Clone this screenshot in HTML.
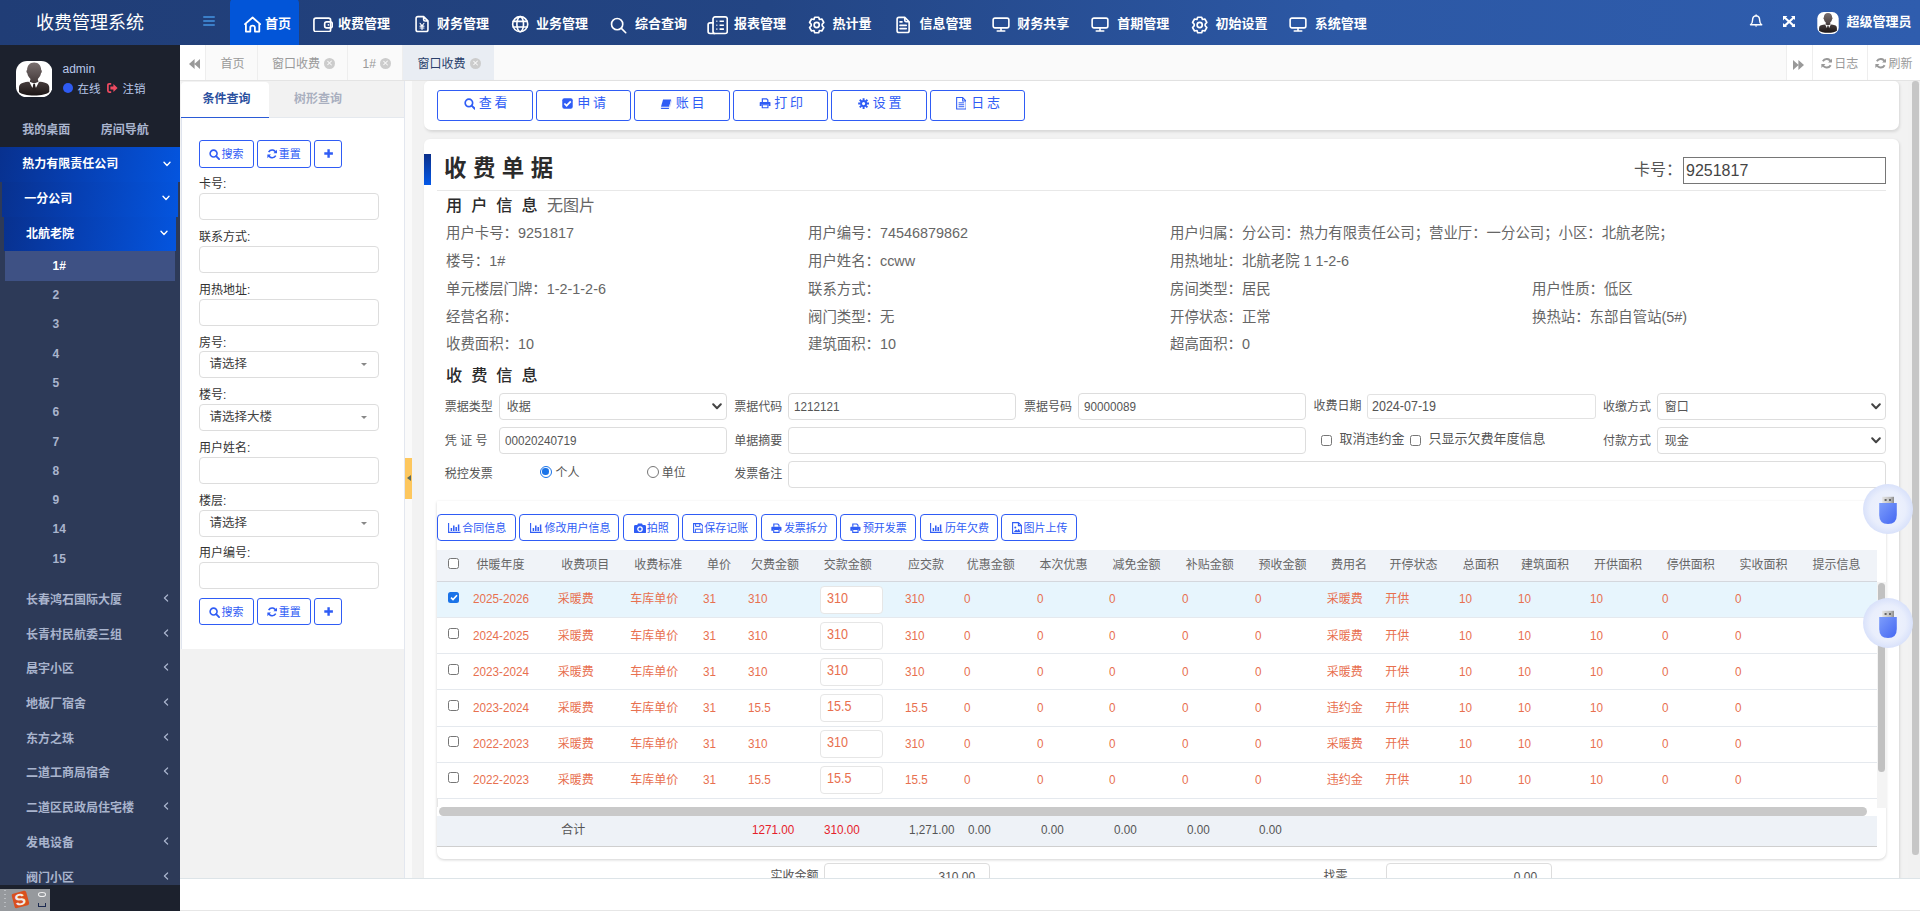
<!DOCTYPE html>
<html lang="zh-CN">
<head>
<meta charset="utf-8">
<title>收费管理系统</title>
<style>
*{box-sizing:border-box;}
html,body{margin:0;padding:0;}
body{width:1920px;height:911px;overflow:hidden;position:relative;background:#f2f2f2;font-family:"Liberation Sans","Noto Sans CJK SC",sans-serif;font-size:12px;color:#333;}
.abs{position:absolute;}
svg{display:block;}
/* ---------- top bar ---------- */
#top{position:absolute;left:0;top:0;width:1920px;height:45px;background:linear-gradient(90deg,#203d76 0%,#234584 40%,#2c58a5 70%,#2f5dae 100%);}
#logo{position:absolute;left:0;top:0;width:180px;height:45px;line-height:46px;text-align:center;color:#fff;font-size:18px;letter-spacing:0;}
#burger{position:absolute;left:203px;top:16px;width:12px;height:10px;}
#burger i{display:block;height:2px;background:#3b7fc9;margin-bottom:2px;border-radius:1px;}
.nav{position:absolute;top:0;height:45px;color:#fff;font-size:14px;font-weight:bold;line-height:46px;white-space:nowrap;letter-spacing:-1.2px;}
.nav svg{position:absolute;top:13px;}
.nt{position:absolute;top:0;height:45px;line-height:47px;color:#fff;font-size:13px;font-weight:bold;white-space:nowrap;}
/* ---------- side ---------- */
#side{position:absolute;left:0;top:45px;width:180px;height:866px;background:#2d3a58;overflow:hidden;}
#user{position:absolute;left:0;top:0;width:180px;height:102px;background:#1c212d;}
.m1{position:absolute;color:#fff;font-weight:bold;font-size:12px;line-height:16px;white-space:nowrap;}
.mi{position:absolute;color:#a9b4cd;font-weight:bold;font-size:12px;line-height:16px;white-space:nowrap;}
/* ---------- tab bar ---------- */
#tabs{position:absolute;left:180px;top:45px;width:1740px;height:36px;background:#fafafa;border-bottom:1px solid #e4e4e4;}
.tab{position:absolute;top:0;height:35px;line-height:38px;border-right:1px solid #eee;color:#999;font-size:12px;white-space:nowrap;}
.tab .x{position:absolute;top:12.5px;width:11px;height:11px;border-radius:50%;background:#ccc;}
.tab .x:before,.tab .x:after{content:"";position:absolute;left:5px;top:2.5px;width:1.4px;height:6px;background:#fafafa;transform:rotate(45deg);}
.tab .x:after{transform:rotate(-45deg);}
.qb{position:absolute;height:28px;border:1px solid #2f5cf5;border-radius:3px;background:#fff;color:#2f5cf5;font-size:11px;line-height:27px;white-space:nowrap;}
.qi{position:absolute;left:18px;width:180px;height:26px;border:1px solid #ddd;border-radius:4px;background:#fff;}
.card{position:absolute;background:#fff;box-shadow:1px 1.5px 3px rgba(0,0,0,.11);}
.tb{position:absolute;width:95.5px;height:31px;border:1px solid #2f5cf5;border-radius:3px;background:#fff;color:#2f5cf5;font-size:13px;letter-spacing:2.7px;line-height:24.5px;white-space:nowrap;}
.inf{position:absolute;font-size:14.4px;line-height:20px;color:#666;white-space:nowrap;}
.fl{position:absolute;font-size:12px;line-height:16px;color:#555;white-space:nowrap;}
.fi{position:absolute;border:1px solid #ddd;border-radius:4px;background:#fff;color:#555;font-size:12px;white-space:nowrap;}
.sb{position:absolute;height:27px;border:1px solid #2f5cf5;border-radius:4px;background:#fff;color:#2f5cf5;font-size:11px;line-height:27px;white-space:nowrap;}
.th{position:absolute;top:556.5px;font-size:12px;line-height:16px;color:#666;white-space:nowrap;}
.td{position:absolute;font-size:12px;line-height:16px;color:#e8704f;white-space:nowrap;}
.nx{display:inline-block;transform:scaleX(.9);transform-origin:0 50%;}
.tn{font-size:13px;}
</style>
</head>
<body>
<!-- TOP -->
<div id="top">
  <div id="logo">收费管理系统</div>
  <div id="burger"><i></i><i></i><i></i></div>
<!--NAV-->
<div class="abs" style="left:230px;top:-2px;width:69px;height:47px;background:#0255d8;border-radius:5px 5px 0 0;"></div>
<div class="abs" style="left:243.9px;top:16.4px"><svg width="18" height="17" viewBox="0 0 18 17"><path d="M1 8.1 L8.6 1.5 L16.2 8.1 M1.9 7.6 V15.6 H6.3 V11.6 Q6.3 9.7 8.6 9.7 Q10.9 9.7 10.9 11.6 V15.6 H15.3 V7.6" stroke="#fff" stroke-width="1.8" fill="none" stroke-linecap="round" stroke-linejoin="round"/></svg></div>
<div class="nt" style="left:265px">首页</div>
<div class="abs" style="left:312.7px;top:16.7px"><svg width="20.4" height="15.8" viewBox="0 0 22 17"><rect x="1" y="1.2" width="18" height="14.6" rx="2.2" stroke="#fff" stroke-width="1.8" fill="none" stroke-linecap="round" stroke-linejoin="round"/><rect x="12.6" y="5.2" width="8.2" height="6.6" rx="2" stroke="#fff" stroke-width="1.8" fill="none" stroke-linecap="round" stroke-linejoin="round"/><circle cx="16.6" cy="8.5" r="0.9" fill="#fff"/></svg></div>
<div class="nt" style="left:338px">收费管理</div>
<div class="abs" style="left:414.5px;top:14.9px"><svg width="14.4" height="18.2" viewBox="0 0 16 19"><path d="M9.6 1.2 H3.2 Q1.2 1.2 1.2 3.2 V15.8 Q1.2 17.8 3.2 17.8 H12.4 Q14.4 17.8 14.4 15.8 V6 Z M9.6 1.2 V4.4 Q9.6 6 11.2 6 H14.4" stroke="#fff" stroke-width="1.8" fill="none" stroke-linecap="round" stroke-linejoin="round"/><path d="M5.6 8.6 L7.8 11.4 L10 8.6 M5.6 11.8 H10 M5.6 13.8 H10 M7.8 11.4 V15.6" stroke="#fff" stroke-width="1.2" fill="none" stroke-linecap="round"/></svg></div>
<div class="nt" style="left:437px">财务管理</div>
<div class="abs" style="left:511.4px;top:15.4px"><svg width="18.4" height="18.4" viewBox="0 0 20 20"><circle cx="10" cy="10" r="8.2" stroke="#fff" stroke-width="1.8" fill="none" stroke-linecap="round" stroke-linejoin="round"/><ellipse cx="10" cy="10" rx="3.6" ry="8.2" stroke="#fff" stroke-width="1.8" fill="none" stroke-linecap="round" stroke-linejoin="round"/><path d="M2.4 7 H17.6 M2.4 13 H17.6" stroke="#fff" stroke-width="1.8" fill="none" stroke-linecap="round" stroke-linejoin="round"/></svg></div>
<div class="nt" style="left:536px">业务管理</div>
<div class="abs" style="left:610.2px;top:16.6px"><svg width="17.2" height="17.2" viewBox="0 0 19 19"><circle cx="7.9" cy="7.9" r="6.2" stroke="#fff" stroke-width="1.8" fill="none" stroke-linecap="round" stroke-linejoin="round"/><path d="M12.6 12.6 L17.4 17.4" stroke="#fff" stroke-width="1.8" fill="none" stroke-linecap="round" stroke-linejoin="round"/></svg></div>
<div class="nt" style="left:635px">综合查询</div>
<div class="abs" style="left:706.6px;top:15.8px"><svg width="21.6" height="18.8" viewBox="0 0 23 20"><rect x="6.4" y="1" width="15.2" height="17.6" rx="2.2" stroke="#fff" stroke-width="1.8" fill="none" stroke-linecap="round" stroke-linejoin="round"/><path d="M6.4 7.4 H3.2 Q1.2 7.4 1.2 9.4 V16.6 Q1.2 18.6 3.2 18.6 H8" stroke="#fff" stroke-width="1.8" fill="none" stroke-linecap="round" stroke-linejoin="round"/><path d="M10 5.6 H11 M13.4 5.6 H18 M10 9.8 H11 M13.4 9.8 H18 M10 14 H11 M13.4 14 H18" stroke="#fff" stroke-width="1.7" fill="none"/></svg></div>
<div class="nt" style="left:734px">报表管理</div>
<div class="abs" style="left:806.5px;top:15.5px"><svg width="19.4" height="18" viewBox="0 0 20 19"><path d="M7.9 1.3 H12.1 L12.9 3.7 L15.4 3.2 L17.5 6.8 L15.8 8.7 V10.3 L17.5 12.2 L15.4 15.8 L12.9 15.3 L12.1 17.7 H7.9 L7.1 15.3 L4.6 15.8 L2.5 12.2 L4.2 10.3 V8.7 L2.5 6.8 L4.6 3.2 L7.1 3.7 Z" stroke="#fff" stroke-width="1.8" fill="none" stroke-linecap="round" stroke-linejoin="round"/><circle cx="10" cy="9.5" r="2.7" stroke="#fff" stroke-width="1.8" fill="none" stroke-linecap="round" stroke-linejoin="round"/></svg></div>
<div class="nt" style="left:832.5px">热计量</div>
<div class="abs" style="left:896px;top:15.8px"><svg width="14.6" height="17.9" viewBox="0 0 16 19"><path d="M9.6 1.2 H3.2 Q1.2 1.2 1.2 3.2 V15.8 Q1.2 17.8 3.2 17.8 H12.4 Q14.4 17.8 14.4 15.8 V6 Z M9.6 1.2 V4.4 Q9.6 6 11.2 6 H14.4" stroke="#fff" stroke-width="1.8" fill="none" stroke-linecap="round" stroke-linejoin="round"/><path d="M4.4 6.2 H6.6 M4.4 10 H11.2 M4.4 13.6 H11.2" stroke="#fff" stroke-width="1.8" fill="none" stroke-linecap="round" stroke-linejoin="round"/></svg></div>
<div class="nt" style="left:919.4px">信息管理</div>
<div class="abs" style="left:992.4px;top:17.2px"><svg width="18" height="15.2" viewBox="0 0 20 17"><rect x="1.2" y="1.2" width="17.6" height="11" rx="2" stroke="#fff" stroke-width="1.8" fill="none" stroke-linecap="round" stroke-linejoin="round"/><path d="M10 12.2 V15.6 M5.8 15.7 H14.2" stroke="#fff" stroke-width="1.8" fill="none" stroke-linecap="round" stroke-linejoin="round"/></svg></div>
<div class="nt" style="left:1017.3px">财务共享</div>
<div class="abs" style="left:1091.4px;top:17.2px"><svg width="18" height="15.2" viewBox="0 0 20 17"><rect x="1.2" y="1.2" width="17.6" height="11" rx="2" stroke="#fff" stroke-width="1.8" fill="none" stroke-linecap="round" stroke-linejoin="round"/><path d="M10 12.2 V15.6 M5.8 15.7 H14.2" stroke="#fff" stroke-width="1.8" fill="none" stroke-linecap="round" stroke-linejoin="round"/></svg></div>
<div class="nt" style="left:1117.2px">首期管理</div>
<div class="abs" style="left:1189.7px;top:15.5px"><svg width="19.4" height="18" viewBox="0 0 20 19"><path d="M7.9 1.3 H12.1 L12.9 3.7 L15.4 3.2 L17.5 6.8 L15.8 8.7 V10.3 L17.5 12.2 L15.4 15.8 L12.9 15.3 L12.1 17.7 H7.9 L7.1 15.3 L4.6 15.8 L2.5 12.2 L4.2 10.3 V8.7 L2.5 6.8 L4.6 3.2 L7.1 3.7 Z" stroke="#fff" stroke-width="1.8" fill="none" stroke-linecap="round" stroke-linejoin="round"/><circle cx="10" cy="9.5" r="2.7" stroke="#fff" stroke-width="1.8" fill="none" stroke-linecap="round" stroke-linejoin="round"/></svg></div>
<div class="nt" style="left:1215.6px">初始设置</div>
<div class="abs" style="left:1289.1px;top:17.2px"><svg width="18" height="15.2" viewBox="0 0 20 17"><rect x="1.2" y="1.2" width="17.6" height="11" rx="2" stroke="#fff" stroke-width="1.8" fill="none" stroke-linecap="round" stroke-linejoin="round"/><path d="M10 12.2 V15.6 M5.8 15.7 H14.2" stroke="#fff" stroke-width="1.8" fill="none" stroke-linecap="round" stroke-linejoin="round"/></svg></div>
<div class="nt" style="left:1314.8px">系统管理</div>
<!--/NAV-->
<svg class="abs" style="left:1749.3px;top:14.2px" width="14.2" height="14.2" viewBox="0 0 14 14"><path d="M7 0.9 V1.8 M7 1.8 Q3.5 2.2 3.5 6.2 Q3.5 9.4 1.4 10.6 H12.6 Q10.5 9.4 10.5 6.2 Q10.5 2.2 7 1.8 Z" stroke="#fff" stroke-width="1.4" fill="none" stroke-linejoin="round" stroke-linecap="round"/><path d="M5.5 11.4 Q7 13.6 8.5 11.4 Z" fill="#fff"/></svg>
<svg class="abs" style="left:1782.8px;top:15.6px" width="12.4" height="11.4" viewBox="0 0 12.4 11.4"><g fill="#fff"><path d="M0 0 H4.4 L0 4.4 Z M12.4 0 V4.4 L8 0 Z M0 11.4 V7 L4.4 11.4 Z M12.4 11.4 H8 L12.4 7 Z"/></g><path d="M1.6 1.5 L10.8 9.9 M10.8 1.5 L1.6 9.9" stroke="#fff" stroke-width="2.1"/></svg>
<svg class="abs" style="left:1817px;top:12px" width="22" height="22" viewBox="0 0 36 37"><rect x="0" y="0" width="36" height="37" rx="11" fill="#fff"/><g clip-path="url(#avc)"><path d="M18 1.5 C22.6 1.5 25 5 25 9.2 C26 9.4 25.8 12 24.8 12.4 C24.4 15.4 22.6 17 21.6 18.2 L22.4 21.4 L24.2 21 C30 22 33 23 33 27 V31.5 C31 33.6 25 35 18 35 C11 35 5 33.6 3 31.5 V27 C3 23 6 22 11.8 21 L13.6 21.4 L14.4 18.2 C13.4 17 11.6 15.4 11.2 12.4 C10.2 12 10 9.4 11 9.2 C11 5 13.4 1.5 18 1.5 Z" fill="url(#avg)"/><path d="M13 20.8 L16.3 27.4 L18 24 L19.7 27.4 L23 20.8 L18 22.8 Z" fill="#fff"/><path d="M17.1 23.4 H18.9 L19.7 29.4 L18 31.4 L16.3 29.4 Z" fill="#2a2222"/></g></svg>
<div class="nt" style="left:1846.6px;top:-2px">超级管理员</div>
</div>
<!-- SIDE -->
<div id="side">
<div id="user">
  <svg class="abs" style="left:15.9px;top:15.7px" width="36.3" height="36.4" viewBox="0 0 36 37" preserveAspectRatio="none"><defs><linearGradient id="avg" x1="0" y1="0" x2="0" y2="1"><stop offset="0" stop-color="#7a7070"/><stop offset="0.55" stop-color="#4a4040"/><stop offset="1" stop-color="#1c1616"/></linearGradient><clipPath id="avc"><rect x="0" y="0" width="36" height="37" rx="11"/></clipPath></defs><rect x="0" y="0" width="36" height="37" rx="11" fill="#fff"/><g clip-path="url(#avc)"><path d="M18 1.5 C22.6 1.5 25 5 25 9.2 C26 9.4 25.8 12 24.8 12.4 C24.4 15.4 22.6 17 21.6 18.2 L22.4 21.4 L24.2 21 C30 22 33 23 33 27 V31.5 C31 33.6 25 35 18 35 C11 35 5 33.6 3 31.5 V27 C3 23 6 22 11.800000000000001 21 L13.6 21.4 L14.4 18.2 C13.4 17 11.6 15.4 11.2 12.4 C10.2 12 10 9.4 11 9.2 C11 5 13.4 1.5 18 1.5 Z" fill="url(#avg)"/><path d="M13 20.8 L16.3 27.4 L18 24 L19.7 27.4 L23 20.8 L18 22.8 Z" fill="#fff"/><path d="M17.1 23.4 H18.9 L19.7 29.4 L18 31.4 L16.3 29.4 Z" fill="#2a2222"/></g></svg>
  <div class="abs" style="left:62.5px;top:15.5px;font-size:12px;line-height:16px;color:#b9c8ea;">admin</div>
  <div class="abs" style="left:62.6px;top:38px;width:10px;height:10px;border-radius:50%;background:#2e5bf3;"></div>
  <div class="abs" style="left:77.5px;top:35.5px;font-size:11.5px;line-height:16px;color:#b9c8ea;">在线</div>
  <svg class="abs" style="left:107px;top:38.2px" width="11" height="10" viewBox="0 0 11 10"><path d="M4.2 0.9 H2.2 Q0.9 0.9 0.9 2.2 V7.8 Q0.9 9.1 2.2 9.1 H4.2" stroke="#ef4a60" stroke-width="1.7" fill="none"/><path d="M3.4 3.6 H6.4 V1 L10.6 5 L6.4 9 V6.4 H3.4 Z" fill="#ef4a60"/></svg>
  <div class="abs" style="left:122.5px;top:35.5px;font-size:11.5px;line-height:16px;color:#b9c8ea;">注销</div>
  <div class="abs" style="left:22.3px;top:77px;font-size:12px;line-height:16px;font-weight:bold;color:#a9b4cd;">我的桌面</div>
  <div class="abs" style="left:100.8px;top:77px;font-size:12px;line-height:16px;font-weight:bold;color:#a9b4cd;">房间导航</div>
</div>
<div class="abs" style="left:0;top:102px;width:180px;height:35px;background:linear-gradient(100deg,#08318f 0%,#0640b4 45%,#0455df 100%)"></div>
<div class="abs" style="left:2px;top:137px;width:176px;height:34.5px;background:linear-gradient(100deg,#08318f 0%,#0640b4 45%,#0455df 100%)"></div>
<div class="abs" style="left:4px;top:171.5px;width:172px;height:34.5px;background:linear-gradient(100deg,#08318f 0%,#0640b4 45%,#0455df 100%)"></div>
<div class="abs" style="left:5px;top:206px;width:170px;height:30px;background:#3e5184"></div>
<div class="m1" style="left:22.3px;top:111px;">热力有限责任公司</div><svg class="abs" style="left:163.2px;top:115.5px" width="8" height="6" viewBox="0 0 8 6"><path d="M1 1.2 L4 4.4 L7 1.2" stroke="#fff" stroke-width="1.4" fill="none" stroke-linecap="round" stroke-linejoin="round"/></svg>
<div class="m1" style="left:24.3px;top:146px;">一分公司</div><svg class="abs" style="left:161.5px;top:150px" width="8" height="6" viewBox="0 0 8 6"><path d="M1 1.2 L4 4.4 L7 1.2" stroke="#fff" stroke-width="1.4" fill="none" stroke-linecap="round" stroke-linejoin="round"/></svg>
<div class="m1" style="left:26.1px;top:181px;">北航老院</div><svg class="abs" style="left:160px;top:184.5px" width="8" height="6" viewBox="0 0 8 6"><path d="M1 1.2 L4 4.4 L7 1.2" stroke="#fff" stroke-width="1.4" fill="none" stroke-linecap="round" stroke-linejoin="round"/></svg>
<div class="mi" style="left:52.6px;top:212.5px;color:#fff;">1#</div>
<div class="mi" style="left:52.6px;top:241.7px;">2</div>
<div class="mi" style="left:52.6px;top:270.7px;">3</div>
<div class="mi" style="left:52.6px;top:300.7px;">4</div>
<div class="mi" style="left:52.6px;top:329.7px;">5</div>
<div class="mi" style="left:52.6px;top:358.7px;">6</div>
<div class="mi" style="left:52.6px;top:388.7px;">7</div>
<div class="mi" style="left:52.6px;top:417.7px;">8</div>
<div class="mi" style="left:52.6px;top:446.7px;">9</div>
<div class="mi" style="left:52.6px;top:475.7px;">14</div>
<div class="mi" style="left:52.6px;top:505.7px;">15</div>
<div class="mi" style="left:26px;top:547.3px;">长春鸿石国际大厦</div>
<svg class="abs" style="left:162.5px;top:549.1px" width="6" height="8" viewBox="0 0 6 8"><path d="M4.6 1 L1.4 4 L4.6 7" stroke="#a9b4cd" stroke-width="1.2" fill="none" stroke-linecap="round" stroke-linejoin="round"/></svg>
<div class="mi" style="left:26px;top:582.3px;">长青村民航委三组</div>
<svg class="abs" style="left:162.5px;top:584.1px" width="6" height="8" viewBox="0 0 6 8"><path d="M4.6 1 L1.4 4 L4.6 7" stroke="#a9b4cd" stroke-width="1.2" fill="none" stroke-linecap="round" stroke-linejoin="round"/></svg>
<div class="mi" style="left:26px;top:616.3px;">晨宇小区</div>
<svg class="abs" style="left:162.5px;top:618.1px" width="6" height="8" viewBox="0 0 6 8"><path d="M4.6 1 L1.4 4 L4.6 7" stroke="#a9b4cd" stroke-width="1.2" fill="none" stroke-linecap="round" stroke-linejoin="round"/></svg>
<div class="mi" style="left:26px;top:651.3px;">地板厂宿舍</div>
<svg class="abs" style="left:162.5px;top:653.1px" width="6" height="8" viewBox="0 0 6 8"><path d="M4.6 1 L1.4 4 L4.6 7" stroke="#a9b4cd" stroke-width="1.2" fill="none" stroke-linecap="round" stroke-linejoin="round"/></svg>
<div class="mi" style="left:26px;top:686.3px;">东方之珠</div>
<svg class="abs" style="left:162.5px;top:688.1px" width="6" height="8" viewBox="0 0 6 8"><path d="M4.6 1 L1.4 4 L4.6 7" stroke="#a9b4cd" stroke-width="1.2" fill="none" stroke-linecap="round" stroke-linejoin="round"/></svg>
<div class="mi" style="left:26px;top:720.3px;">二道工商局宿舍</div>
<svg class="abs" style="left:162.5px;top:722.1px" width="6" height="8" viewBox="0 0 6 8"><path d="M4.6 1 L1.4 4 L4.6 7" stroke="#a9b4cd" stroke-width="1.2" fill="none" stroke-linecap="round" stroke-linejoin="round"/></svg>
<div class="mi" style="left:26px;top:755.3px;">二道区民政局住宅楼</div>
<svg class="abs" style="left:162.5px;top:757.1px" width="6" height="8" viewBox="0 0 6 8"><path d="M4.6 1 L1.4 4 L4.6 7" stroke="#a9b4cd" stroke-width="1.2" fill="none" stroke-linecap="round" stroke-linejoin="round"/></svg>
<div class="mi" style="left:26px;top:790.3px;">发电设备</div>
<svg class="abs" style="left:162.5px;top:792.1px" width="6" height="8" viewBox="0 0 6 8"><path d="M4.6 1 L1.4 4 L4.6 7" stroke="#a9b4cd" stroke-width="1.2" fill="none" stroke-linecap="round" stroke-linejoin="round"/></svg>
<div class="mi" style="left:26px;top:825.3px;">阀门小区</div>
<svg class="abs" style="left:162.5px;top:827.1px" width="6" height="8" viewBox="0 0 6 8"><path d="M4.6 1 L1.4 4 L4.6 7" stroke="#a9b4cd" stroke-width="1.2" fill="none" stroke-linecap="round" stroke-linejoin="round"/></svg>
<div class="abs" style="left:0;top:840px;width:180px;height:26px;background:#1c212d"></div>
</div>
<!-- TABS -->
<div id="tabs">
<div class="abs" style="left:0;top:0;width:26px;height:35px;background:#fff;border-right:1px solid #eee;"><svg class="abs" style="left:8.5px;top:14px" width="11" height="10" viewBox="0 0 11 10"><path d="M5.6 0 V10 L0 5 Z M11 0 V10 L5.4 5 Z" fill="#999"/></svg></div>
<div class="tab" style="left:26px;width:51.5px;"><span class="abs" style="left:14.5px;top:0">首页</span></div>
<div class="tab" style="left:77.5px;width:90px;"><span class="abs" style="left:14.5px;top:0">窗口收费</span><i class="x" style="left:66px"></i></div>
<div class="tab" style="left:167.5px;width:55.5px;"><span class="abs" style="left:15px;top:0">1#</span><i class="x" style="left:32.5px"></i></div>
<div class="tab" style="left:223px;width:91px;background:#e9edf3;color:#2a3f6b;border-right:none;"><span class="abs" style="left:14.5px;top:0">窗口收费</span><i class="x" style="left:66.5px"></i></div>
<div class="abs" style="left:1605.5px;top:0;width:27px;height:35px;background:#fff;border-left:1px solid #eee;"><svg class="abs" style="left:6px;top:14.5px" width="11" height="10" viewBox="0 0 11 10"><path d="M0 0 V10 L5.6 5 Z M5.4 0 V10 L11 5 Z" fill="#999"/></svg></div>
<div class="abs" style="left:1632px;top:0;width:54.5px;height:35px;background:#fff;border-left:1px solid #eee;color:#999;font-size:12px;line-height:36px;"><svg class="abs" style="left:7.6px;top:13px" width="11.5" height="10.5" viewBox="0 0 12 11"><path d="M10.3 4.2 A4.6 4.6 0 0 0 1.9 3.4" stroke="#999" stroke-width="2" fill="none"/><path d="M11.6 0.6 V4.8 H7.4 Z" fill="#999"/><path d="M1.7 6.8 A4.6 4.6 0 0 0 10.1 7.6" stroke="#999" stroke-width="2" fill="none"/><path d="M0.4 10.4 V6.2 H4.6 Z" fill="#999"/></svg><span class="abs" style="left:21.2px;top:1px">日志</span></div>
<div class="abs" style="left:1686.5px;top:0;width:53.5px;height:35px;background:#fff;border-left:1px solid #eee;color:#999;font-size:12px;line-height:36px;"><svg class="abs" style="left:7px;top:13px" width="11.5" height="10.5" viewBox="0 0 12 11"><path d="M10.3 4.2 A4.6 4.6 0 0 0 1.9 3.4" stroke="#999" stroke-width="2" fill="none"/><path d="M11.6 0.6 V4.8 H7.4 Z" fill="#999"/><path d="M1.7 6.8 A4.6 4.6 0 0 0 10.1 7.6" stroke="#999" stroke-width="2" fill="none"/><path d="M0.4 10.4 V6.2 H4.6 Z" fill="#999"/></svg><span class="abs" style="left:21px;top:1px">刷新</span></div>
</div>
<!-- QUERY -->
<div id="query" class="abs" style="left:181px;top:81.5px;width:224px;height:797px;">
<div class="abs" style="left:0;top:0;width:224px;height:36px;background:#f2f2f2;border-bottom:1px solid #e5e9ee;"></div>
<div class="abs" style="left:0;top:0;width:88px;height:36px;background:#fff;border-bottom:1.5px solid #2b5bd6;border-radius:4px 4px 0 0;color:#2a4f9e;font-weight:bold;font-size:12px;line-height:35px;text-align:center;padding-left:3px;">条件查询</div>
<div class="abs" style="left:88px;top:0;width:98px;height:35px;color:#a9afbf;font-weight:bold;font-size:12px;line-height:35px;text-align:center;">树形查询</div>
<div class="abs" style="left:0;top:36px;width:224px;height:531px;background:#fff;border-left:1px solid #dfe4ee;border-right:1px solid #ececec;"></div>
<div class="qb" style="left:18px;top:58.5px;width:55px;"><svg class="abs" style="left:8.8px;top:8.4px" width="11" height="11" viewBox="0 0 12 12"><circle cx="5" cy="5" r="3.8" stroke="#2f5cf5" stroke-width="1.7" fill="none"/><path d="M7.8 7.8 L11 11" stroke="#2f5cf5" stroke-width="2" stroke-linecap="round"/></svg><span class="abs" style="left:21.5px;top:0">搜索</span></div><div class="qb" style="left:76px;top:58.5px;width:54px;"><svg class="abs" style="left:8.7px;top:8.2px" width="10.4" height="9.8" viewBox="0 0 12 11"><path d="M10.3 4.2 A4.6 4.6 0 0 0 1.9 3.4" stroke="#2f5cf5" stroke-width="1.8" fill="none"/><path d="M11.6 0.6 V4.8 H7.4 Z" fill="#2f5cf5"/><path d="M1.7 6.8 A4.6 4.6 0 0 0 10.1 7.6" stroke="#2f5cf5" stroke-width="1.8" fill="none"/><path d="M0.4 10.4 V6.2 H4.6 Z" fill="#2f5cf5"/></svg><span class="abs" style="left:20.8px;top:0">重置</span></div><div class="qb" style="left:133px;top:58.5px;width:28px;"><svg class="abs" style="left:8.6px;top:8.4px" width="9.2" height="9" viewBox="0 0 9 9"><path d="M4.5 0.3 V8.7 M0.2 4.5 H8.8" stroke="#2f5cf5" stroke-width="2.4"/></svg></div>
<div class="abs" style="left:18px;top:94.9px;font-size:12px;line-height:16px;color:#333;">卡号:</div>
<div class="qi" style="top:111.5px;height:27px;"></div>
<div class="abs" style="left:18px;top:147.2px;font-size:12px;line-height:16px;color:#333;">联系方式:</div>
<div class="qi" style="top:164.5px;height:27px;"></div>
<div class="abs" style="left:18px;top:200.2px;font-size:12px;line-height:16px;color:#333;">用热地址:</div>
<div class="qi" style="top:217.5px;height:27px;"></div>
<div class="abs" style="left:18px;top:253.0px;font-size:12px;line-height:16px;color:#333;">房号:</div>
<div class="qi" style="top:269.5px;height:27px;"><span class="abs" style="left:9.5px;top:0;line-height:25.5px;font-size:12.5px;color:#444;">请选择</span><i class="abs" style="left:160.8px;top:10.7px;border:3.2px solid transparent;border-top:3.6px solid #888;border-bottom:none;width:0;height:0;"></i></div>
<div class="abs" style="left:18px;top:305.7px;font-size:12px;line-height:16px;color:#333;">楼号:</div>
<div class="qi" style="top:322.5px;height:27px;"><span class="abs" style="left:9.5px;top:0;line-height:25.5px;font-size:12.5px;color:#444;">请选择大楼</span><i class="abs" style="left:160.8px;top:10.7px;border:3.2px solid transparent;border-top:3.6px solid #888;border-bottom:none;width:0;height:0;"></i></div>
<div class="abs" style="left:18px;top:358.4px;font-size:12px;line-height:16px;color:#333;">用户姓名:</div>
<div class="qi" style="top:375.5px;height:27px;"></div>
<div class="abs" style="left:18px;top:411.2px;font-size:12px;line-height:16px;color:#333;">楼层:</div>
<div class="qi" style="top:428.5px;height:27px;"><span class="abs" style="left:9.5px;top:0;line-height:25.5px;font-size:12.5px;color:#444;">请选择</span><i class="abs" style="left:160.8px;top:10.7px;border:3.2px solid transparent;border-top:3.6px solid #888;border-bottom:none;width:0;height:0;"></i></div>
<div class="abs" style="left:18px;top:463.8px;font-size:12px;line-height:16px;color:#333;">用户编号:</div>
<div class="qi" style="top:480.5px;height:27px;"></div>
<div class="qb" style="left:18px;top:516.5px;width:55px;height:27px;line-height:26px;"><svg class="abs" style="left:8.8px;top:8.4px" width="11" height="11" viewBox="0 0 12 12"><circle cx="5" cy="5" r="3.8" stroke="#2f5cf5" stroke-width="1.7" fill="none"/><path d="M7.8 7.8 L11 11" stroke="#2f5cf5" stroke-width="2" stroke-linecap="round"/></svg><span class="abs" style="left:21.5px;top:0">搜索</span></div><div class="qb" style="left:76px;top:516.5px;width:54px;height:27px;line-height:26px;"><svg class="abs" style="left:8.7px;top:8.2px" width="10.4" height="9.8" viewBox="0 0 12 11"><path d="M10.3 4.2 A4.6 4.6 0 0 0 1.9 3.4" stroke="#2f5cf5" stroke-width="1.8" fill="none"/><path d="M11.6 0.6 V4.8 H7.4 Z" fill="#2f5cf5"/><path d="M1.7 6.8 A4.6 4.6 0 0 0 10.1 7.6" stroke="#2f5cf5" stroke-width="1.8" fill="none"/><path d="M0.4 10.4 V6.2 H4.6 Z" fill="#2f5cf5"/></svg><span class="abs" style="left:20.8px;top:0">重置</span></div><div class="qb" style="left:133px;top:516.5px;width:28px;height:27px;"><svg class="abs" style="left:8.6px;top:8.4px" width="9.2" height="9" viewBox="0 0 9 9"><path d="M4.5 0.3 V8.7 M0.2 4.5 H8.8" stroke="#2f5cf5" stroke-width="2.4"/></svg></div>
</div>
<div class="abs" style="left:404px;top:81px;width:8px;height:797px;background:#fafafa;border-left:1px solid #e3e7ef;"></div>
<div class="abs" style="left:404.5px;top:458px;width:7.5px;height:40.5px;background:#fdc75e;"><i class="abs" style="left:2.8px;top:16.8px;width:0;height:0;border:3.4px solid transparent;border-right:4px solid #5c6a5c;border-left:none;"></i></div>
<!-- MAIN -->
<div id="main">
<div class="abs" style="left:1908px;top:81px;width:12px;height:797px;background:#f1f1f1;"></div>
<div class="abs" style="left:1912.3px;top:81px;width:6.6px;height:774px;background:#c6c6c6;border-radius:3.3px;"></div>
<div class="card" style="left:424px;top:81px;width:1475px;height:49px;border-radius:5px 5px 7px 7px;"></div>
<div class="tb" style="left:437.0px;top:90px;"><svg class="abs" style="left:25.6px;top:6.9px" width="11.8" height="11.8" viewBox="0 0 12 12"><circle cx="5" cy="5" r="3.8" stroke="#2f5cf5" stroke-width="1.7" fill="none"/><path d="M7.8 7.8 L11 11" stroke="#2f5cf5" stroke-width="2" stroke-linecap="round"/></svg><span class="abs" style="left:40.7px;top:0">查看</span></div>
<div class="tb" style="left:535.5px;top:90px;"><svg class="abs" style="left:25.7px;top:7.1px" width="11" height="11" viewBox="0 0 12 12"><rect x="0.3" y="0.3" width="11.4" height="11.4" rx="2.2" fill="#2f5cf5"/><path d="M2.6 6 L5 8.4 L9.6 3.6" stroke="#fff" stroke-width="1.9" fill="none"/></svg><span class="abs" style="left:40.7px;top:0">申请</span></div>
<div class="tb" style="left:634.0px;top:90px;"><svg class="abs" style="left:25.2px;top:7.6px" width="11.8" height="10.4" viewBox="0 0 12 11"><path d="M3 0.4 H11.6 L9.4 8.2 H0.8 Z" fill="#2f5cf5"/><path d="M0.6 9.2 Q0.4 10.6 1.8 10.6 H9 L9.6 9.2 Z" fill="#2f5cf5"/><path d="M9.9 8.6 L11.9 1.6" stroke="#c9d3fb" stroke-width="1"/></svg><span class="abs" style="left:40.7px;top:0">账目</span></div>
<div class="tb" style="left:732.5px;top:90px;"><svg class="abs" style="left:25.4px;top:7.4px" width="12.2" height="10.6" viewBox="0 0 13 12"><path d="M3.4 4.4 V1 H8.2 L9.6 2.4 V4.4" stroke="#2f5cf5" stroke-width="1.4" fill="none"/><path d="M1.2 4.4 H11.8 Q12.6 4.4 12.6 5.2 V9 H10.4 V7 H2.6 V9 H0.4 V5.2 Q0.4 4.4 1.2 4.4 Z" fill="#2f5cf5"/><path d="M3.3 7.6 H9.7 V11 H3.3 Z" stroke="#2f5cf5" stroke-width="1.3" fill="none"/></svg><span class="abs" style="left:40.7px;top:0">打印</span></div>
<div class="tb" style="left:831.0px;top:90px;"><svg class="abs" style="left:25.6px;top:7px" width="11.2" height="11.2" viewBox="0 0 12 12"><path d="M6 2.2 A3.8 3.8 0 1 0 6 9.8 A3.8 3.8 0 1 0 6 2.2 Z M6 4.3 A1.7 1.7 0 1 1 6 7.7 A1.7 1.7 0 1 1 6 4.3 Z" fill="#2f5cf5" fill-rule="evenodd"/><g stroke="#2f5cf5" stroke-width="2.1"><path d="M6 0.2 V2.6 M6 9.4 V11.8 M0.2 6 H2.6 M9.4 6 H11.8 M1.9 1.9 L3.6 3.6 M8.4 8.4 L10.1 10.1 M1.9 10.1 L3.6 8.4 M8.4 3.6 L10.1 1.9"/></g></svg><span class="abs" style="left:40.7px;top:0">设置</span></div>
<div class="tb" style="left:929.5px;top:90px;"><svg class="abs" style="left:25.2px;top:6px" width="10.8" height="12.6" viewBox="0 0 11 13"><path d="M0.6 0.6 H6.8 L10.4 4.2 V12.4 H0.6 Z M6.8 0.6 V4.2 H10.4" stroke="#2f5cf5" stroke-width="1.1" fill="none"/><path d="M2.6 6 H8.4 M2.6 8 H8.4 M2.6 10 H8.4" stroke="#2f5cf5" stroke-width="1"/></svg><span class="abs" style="left:40.7px;top:0">日志</span></div>
<div class="card" style="left:424px;top:138.8px;width:1475px;height:760px;border-radius:6px;"></div>
<div class="abs" style="left:424px;top:154px;width:7px;height:31px;background:linear-gradient(180deg,#0a2f8a,#0458e8);"></div>
<div class="abs" style="left:444px;top:154.3px;font-size:22.4px;line-height:30px;font-weight:bold;letter-spacing:6.5px;color:#2b2b2b;white-space:nowrap;">收费单据</div>
<div class="abs" style="left:1634px;top:160px;font-size:16px;line-height:20px;color:#555;white-space:nowrap;">卡号：</div>
<div class="abs" style="left:1683px;top:157px;width:203px;height:27px;border:1px solid #767676;background:#fff;font-size:16px;line-height:25px;padding-left:2px;color:#444;">9251817</div>
<div class="abs" style="left:437px;top:190px;width:1449px;height:1px;background:#e8e8e8;"></div>
<div class="abs" style="left:446px;top:193px;font-size:16.2px;line-height:24px;font-weight:500;letter-spacing:9px;color:#2b2b2b;white-space:nowrap;">用户信息</div>
<div class="abs" style="left:547px;top:194px;font-size:16px;line-height:24px;color:#666;white-space:nowrap;">无图片</div>
<div class="inf" style="left:446px;top:223px;">用户卡号：9251817</div>
<div class="inf" style="left:808px;top:223px;">用户编号：74546879862</div>
<div class="inf" style="left:1170px;top:223px;">用户归属：分公司：热力有限责任公司；营业厅：一分公司；小区：北航老院；</div>
<div class="inf" style="left:446px;top:251px;">楼号：1#</div>
<div class="inf" style="left:808px;top:251px;">用户姓名：ccww</div>
<div class="inf" style="left:1170px;top:251px;">用热地址：北航老院 1 1-2-6</div>
<div class="inf" style="left:446px;top:279px;">单元楼层门牌：1-2-1-2-6</div>
<div class="inf" style="left:808px;top:279px;">联系方式：</div>
<div class="inf" style="left:1170px;top:279px;">房间类型：居民</div>
<div class="inf" style="left:1532px;top:279px;">用户性质：低区</div>
<div class="inf" style="left:446px;top:307px;">经营名称：</div>
<div class="inf" style="left:808px;top:307px;">阀门类型：无</div>
<div class="inf" style="left:1170px;top:307px;">开停状态：正常</div>
<div class="inf" style="left:1532px;top:307px;">换热站：东部自管站(5#)</div>
<div class="inf" style="left:446px;top:334px;">收费面积：10</div>
<div class="inf" style="left:808px;top:334px;">建筑面积：10</div>
<div class="inf" style="left:1170px;top:334px;">超高面积：0</div>
<div class="abs" style="left:446px;top:363px;font-size:16.2px;line-height:24px;font-weight:500;letter-spacing:9px;color:#2b2b2b;white-space:nowrap;">收费信息</div>
<div class="fl" style="left:444.8px;top:398.5px;">票据类型</div>
<div class="fi" style="left:499px;top:393px;width:228px;height:27px;line-height:26px;padding-left:6.8px;">收据<svg class="abs" style="right:4.2px;top:9.2px" width="10" height="7" viewBox="0 0 10 7"><path d="M1.2 1.3 L5 5.2 L8.8 1.3" stroke="#444" stroke-width="2" fill="none" stroke-linecap="round" stroke-linejoin="round"/></svg></div>
<div class="fl" style="left:734.3px;top:398.5px;">票据代码</div>
<div class="fi" style="left:788px;top:393px;width:228px;height:27px;line-height:25px;font-size:13px;padding-left:5px;"><span class="nx">1212121</span></div>
<div class="fl" style="left:1024px;top:398.5px;">票据号码</div>
<div class="fi" style="left:1078px;top:393px;width:228px;height:27px;line-height:25px;font-size:13px;padding-left:5px;"><span class="nx">90000089</span></div>
<div class="fl" style="left:1313.5px;top:398.0px;">收费日期</div>
<div class="fi" style="left:1367px;top:394px;width:229px;height:25px;line-height:22px;font-size:14px;padding-left:4px;border-color:#e2e2e2;border-radius:3px;"><span class="nx" style="transform:scaleX(.893)">2024-07-19</span></div>
<div class="fl" style="left:1603px;top:398.5px;">收缴方式</div>
<div class="fi" style="left:1657px;top:393px;width:229px;height:27px;line-height:26px;padding-left:6.8px;">窗口<svg class="abs" style="right:4.2px;top:9.2px" width="10" height="7" viewBox="0 0 10 7"><path d="M1.2 1.3 L5 5.2 L8.8 1.3" stroke="#444" stroke-width="2" fill="none" stroke-linecap="round" stroke-linejoin="round"/></svg></div>
<div class="fl" style="left:444.8px;top:432.5px;">凭 证 号</div>
<div class="fi" style="left:499px;top:427px;width:228px;height:27px;line-height:25px;font-size:13px;padding-left:5px;"><span class="nx">00020240719</span></div>
<div class="fl" style="left:734.3px;top:432.5px;">单据摘要</div>
<div class="fi" style="left:788px;top:427px;width:518px;height:27px;line-height:25px;font-size:12px;padding-left:5px;"></div>
<div class="abs" style="left:1320.8px;top:435px;width:11.4px;height:11px;border:1px solid #767676;border-radius:2.5px;background:#fff;"></div>
<div class="abs" style="left:1339.6px;top:430px;font-size:13px;line-height:17px;color:#555;white-space:nowrap;">取消违约金</div>
<div class="abs" style="left:1409.8px;top:435px;width:11.4px;height:11px;border:1px solid #767676;border-radius:2.5px;background:#fff;"></div>
<div class="abs" style="left:1428.6px;top:430px;font-size:13px;line-height:17px;color:#555;white-space:nowrap;">只显示欠费年度信息</div>
<div class="fl" style="left:1603px;top:432.5px;">付款方式</div>
<div class="fi" style="left:1657px;top:427px;width:229px;height:27px;line-height:26px;padding-left:6.8px;">现金<svg class="abs" style="right:4.2px;top:9.2px" width="10" height="7" viewBox="0 0 10 7"><path d="M1.2 1.3 L5 5.2 L8.8 1.3" stroke="#444" stroke-width="2" fill="none" stroke-linecap="round" stroke-linejoin="round"/></svg></div>
<div class="fl" style="left:444.8px;top:466.0px;">税控发票</div>
<div class="abs" style="left:540px;top:466px;width:12px;height:12px;border:1.4px solid #1a73e8;border-radius:50%;background:#fff;"><i class="abs" style="left:1.4px;top:1.4px;width:6.4px;height:6.4px;border-radius:50%;background:#1a73e8;"></i></div>
<div class="fl" style="left:555.5px;top:464.5px;">个人</div>
<div class="abs" style="left:647px;top:466px;width:12px;height:12px;border:1px solid #767676;border-radius:50%;background:#fff;"></div>
<div class="fl" style="left:661.8px;top:464.5px;">单位</div>
<div class="fl" style="left:734.3px;top:466.0px;">发票备注</div>
<div class="fi" style="left:788px;top:461px;width:1098px;height:27px;line-height:25px;font-size:12px;padding-left:5px;"></div>
<div class="abs" style="left:437px;top:500.5px;width:1449px;height:358px;background:#fff;border-radius:1px 1px 7px 7px;box-shadow:0 1px 3px rgba(0,0,0,.18);"></div>
<div class="sb" style="left:437.3px;top:514px;width:78.5px;"><svg class="abs" style="left:10px;top:8px" width="12.5" height="10" viewBox="0 0 12.5 10"><path d="M0.6 0 V9.4 H12.5" stroke="#2f5cf5" stroke-width="1.1" fill="none"/><path d="M3.4 5 V8 M5.8 2.4 V8 M8.2 4 V8 M10.6 1.4 V8" stroke="#2f5cf5" stroke-width="1.5"/></svg><span class="abs" style="left:24px;top:0">合同信息</span></div>
<div class="sb" style="left:519.3px;top:514px;width:99.5px;"><svg class="abs" style="left:10px;top:8px" width="12.5" height="10" viewBox="0 0 12.5 10"><path d="M0.6 0 V9.4 H12.5" stroke="#2f5cf5" stroke-width="1.1" fill="none"/><path d="M3.4 5 V8 M5.8 2.4 V8 M8.2 4 V8 M10.6 1.4 V8" stroke="#2f5cf5" stroke-width="1.5"/></svg><span class="abs" style="left:24.2px;top:0">修改用户信息</span></div>
<div class="sb" style="left:623.2px;top:514px;width:55.8px;"><svg class="abs" style="left:9.5px;top:7.5px" width="12" height="10.5" viewBox="0 0 12 10.5"><path d="M1.4 2 H3.2 L4 0.4 H8 L8.8 2 H10.6 Q12 2 12 3.4 V9.1 Q12 10.5 10.6 10.5 H1.4 Q0 10.5 0 9.1 V3.4 Q0 2 1.4 2 Z" fill="#2f5cf5"/><circle cx="6" cy="6.1" r="2.2" stroke="#fff" stroke-width="1.3" fill="none"/></svg><span class="abs" style="left:22.5px;top:0">拍照</span></div>
<div class="sb" style="left:682.2px;top:514px;width:74.6px;"><svg class="abs" style="left:9.5px;top:7.5px" width="10.5" height="10.5" viewBox="0 0 10.5 10.5"><path d="M0.6 0.6 H7.6 L9.9 2.9 V9.9 H0.6 Z" stroke="#2f5cf5" stroke-width="1.1" fill="none"/><path d="M2.6 0.6 V3.4 H6.8 V0.6 M2.4 9.9 V6.2 H8.1 V9.9" stroke="#2f5cf5" stroke-width="1" fill="none"/></svg><span class="abs" style="left:21px;top:0">保存记账</span></div>
<div class="sb" style="left:761.2px;top:514px;width:75.7px;"><svg class="abs" style="left:9.3px;top:7.7px" width="10.8" height="10.4" viewBox="0 0 13 12"><path d="M3.4 4.4 V1 H8.2 L9.6 2.4 V4.4" stroke="#2f5cf5" stroke-width="1.4" fill="none"/><path d="M1.2 4.4 H11.8 Q12.6 4.4 12.6 5.2 V9 H10.4 V7 H2.6 V9 H0.4 V5.2 Q0.4 4.4 1.2 4.4 Z" fill="#2f5cf5"/><path d="M3.3 7.6 H9.7 V11 H3.3 Z" stroke="#2f5cf5" stroke-width="1.3" fill="none"/></svg><span class="abs" style="left:21.7px;top:0">发票拆分</span></div>
<div class="sb" style="left:840.2px;top:514px;width:75.7px;"><svg class="abs" style="left:9.3px;top:7.7px" width="10.8" height="10.4" viewBox="0 0 13 12"><path d="M3.4 4.4 V1 H8.2 L9.6 2.4 V4.4" stroke="#2f5cf5" stroke-width="1.4" fill="none"/><path d="M1.2 4.4 H11.8 Q12.6 4.4 12.6 5.2 V9 H10.4 V7 H2.6 V9 H0.4 V5.2 Q0.4 4.4 1.2 4.4 Z" fill="#2f5cf5"/><path d="M3.3 7.6 H9.7 V11 H3.3 Z" stroke="#2f5cf5" stroke-width="1.3" fill="none"/></svg><span class="abs" style="left:21.7px;top:0">预开发票</span></div>
<div class="sb" style="left:920px;top:514px;width:77.7px;"><svg class="abs" style="left:9.4px;top:8px" width="12.5" height="10" viewBox="0 0 12.5 10"><path d="M0.6 0 V9.4 H12.5" stroke="#2f5cf5" stroke-width="1.1" fill="none"/><path d="M3.4 5 V8 M5.8 2.4 V8 M8.2 4 V8 M10.6 1.4 V8" stroke="#2f5cf5" stroke-width="1.5"/></svg><span class="abs" style="left:24px;top:0">历年欠费</span></div>
<div class="sb" style="left:1001.2px;top:514px;width:75.7px;"><svg class="abs" style="left:9.7px;top:7px" width="10" height="12" viewBox="0 0 10 12"><path d="M0.6 0.6 H6.4 L9.4 3.6 V11.4 H0.6 Z M6.4 0.6 V3.6 H9.4" stroke="#2f5cf5" stroke-width="1.1" fill="none"/><circle cx="3.3" cy="5.4" r="1" fill="#2f5cf5"/><path d="M1.8 10 L4 7.4 L5.4 8.8 L6.8 6.8 L8.4 10 Z" fill="#2f5cf5"/></svg><span class="abs" style="left:21.4px;top:0">图片上传</span></div>
<div class="abs" style="left:437px;top:550.4px;width:1439.5px;height:31.2px;background:#f0f3f8;border-bottom:1px solid #d4d7dd;"></div>
<div class="abs" style="left:448px;top:557.6px;width:11px;height:11px;border:1px solid #767676;border-radius:2.5px;background:#fff;"></div>
<div class="th" style="left:476.5px;">供暖年度</div>
<div class="th" style="left:561.2px;">收费项目</div>
<div class="th" style="left:634.2px;">收费标准</div>
<div class="th" style="left:707px;">单价</div>
<div class="th" style="left:751.1px;">欠费金额</div>
<div class="th" style="left:823.8px;">交款金额</div>
<div class="th" style="left:908.1px;">应交款</div>
<div class="th" style="left:966.7px;">优惠金额</div>
<div class="th" style="left:1039.6px;">本次优惠</div>
<div class="th" style="left:1112.4px;">减免金额</div>
<div class="th" style="left:1185.7px;">补贴金额</div>
<div class="th" style="left:1258.6px;">预收金额</div>
<div class="th" style="left:1331px;">费用名</div>
<div class="th" style="left:1389.6px;">开停状态</div>
<div class="th" style="left:1462.8px;">总面积</div>
<div class="th" style="left:1521px;">建筑面积</div>
<div class="th" style="left:1593.9px;">开供面积</div>
<div class="th" style="left:1666.7px;">停供面积</div>
<div class="th" style="left:1739.6px;">实收面积</div>
<div class="th" style="left:1812.4px;">提示信息</div>
<div class="abs" style="left:437px;top:582px;width:1439.5px;height:36px;background:#e7f5fd;border-bottom:1px solid #e5e9ee;"></div>
<div class="abs" style="left:448px;top:591.8px;width:11px;height:11px;border-radius:2.5px;background:#1a73e8;"><svg class="abs" style="left:1.5px;top:2px" width="8" height="7" viewBox="0 0 8 7"><path d="M1 3.6 L3 5.6 L7 1.2" stroke="#fff" stroke-width="1.6" fill="none"/></svg></div>
<div class="td" style="left:473.3px;top:591.1px;"><span class="nx tn">2025-2026</span></div>
<div class="td" style="left:557.8px;top:591.1px;">采暖费</div>
<div class="td" style="left:630.3px;top:591.1px;">车库单价</div>
<div class="td" style="left:703.4px;top:591.1px;"><span class="nx tn">31</span></div>
<div class="td" style="left:747.8px;top:591.1px;"><span class="nx tn">310</span></div>
<div class="td" style="left:905.4px;top:591.1px;"><span class="nx tn">310</span></div>
<div class="td" style="left:964px;top:591.1px;"><span class="nx tn">0</span></div>
<div class="td" style="left:1036.5px;top:591.1px;"><span class="nx tn">0</span></div>
<div class="td" style="left:1109.2px;top:591.1px;"><span class="nx tn">0</span></div>
<div class="td" style="left:1181.9px;top:591.1px;"><span class="nx tn">0</span></div>
<div class="td" style="left:1254.7px;top:591.1px;"><span class="nx tn">0</span></div>
<div class="td" style="left:1326.7px;top:591.1px;">采暖费</div>
<div class="td" style="left:1385.3px;top:591.1px;">开供</div>
<div class="td" style="left:1458.9px;top:591.1px;"><span class="nx tn">10</span></div>
<div class="td" style="left:1517.5px;top:591.1px;"><span class="nx tn">10</span></div>
<div class="td" style="left:1590px;top:591.1px;"><span class="nx tn">10</span></div>
<div class="td" style="left:1662.4px;top:591.1px;"><span class="nx tn">0</span></div>
<div class="td" style="left:1735.2px;top:591.1px;"><span class="nx tn">0</span></div>
<div class="abs" style="left:820.2px;top:586px;width:63px;height:28px;border:1px solid #e6e6e6;border-radius:4px;background:#fff;color:#e8704f;font-size:12.7px;line-height:22px;padding-left:6px;"><span class="nx" style="font-size:14px;transform:scaleX(.9)">310</span></div>
<div class="abs" style="left:437px;top:618px;width:1439.5px;height:36px;background:#fff;border-bottom:1px solid #e5e9ee;"></div>
<div class="abs" style="left:448px;top:628.2px;width:11px;height:11px;border:1px solid #767676;border-radius:2.5px;background:#fff;"></div>
<div class="td" style="left:473.3px;top:628.3px;"><span class="nx tn">2024-2025</span></div>
<div class="td" style="left:557.8px;top:628.3px;">采暖费</div>
<div class="td" style="left:630.3px;top:628.3px;">车库单价</div>
<div class="td" style="left:703.4px;top:628.3px;"><span class="nx tn">31</span></div>
<div class="td" style="left:747.8px;top:628.3px;"><span class="nx tn">310</span></div>
<div class="td" style="left:905.4px;top:628.3px;"><span class="nx tn">310</span></div>
<div class="td" style="left:964px;top:628.3px;"><span class="nx tn">0</span></div>
<div class="td" style="left:1036.5px;top:628.3px;"><span class="nx tn">0</span></div>
<div class="td" style="left:1109.2px;top:628.3px;"><span class="nx tn">0</span></div>
<div class="td" style="left:1181.9px;top:628.3px;"><span class="nx tn">0</span></div>
<div class="td" style="left:1254.7px;top:628.3px;"><span class="nx tn">0</span></div>
<div class="td" style="left:1326.7px;top:628.3px;">采暖费</div>
<div class="td" style="left:1385.3px;top:628.3px;">开供</div>
<div class="td" style="left:1458.9px;top:628.3px;"><span class="nx tn">10</span></div>
<div class="td" style="left:1517.5px;top:628.3px;"><span class="nx tn">10</span></div>
<div class="td" style="left:1590px;top:628.3px;"><span class="nx tn">10</span></div>
<div class="td" style="left:1662.4px;top:628.3px;"><span class="nx tn">0</span></div>
<div class="td" style="left:1735.2px;top:628.3px;"><span class="nx tn">0</span></div>
<div class="abs" style="left:820.2px;top:622.2px;width:63px;height:28px;border:1px solid #e6e6e6;border-radius:4px;background:#fff;color:#e8704f;font-size:12.7px;line-height:22px;padding-left:6px;"><span class="nx" style="font-size:14px;transform:scaleX(.9)">310</span></div>
<div class="abs" style="left:437px;top:654px;width:1439.5px;height:36px;background:#fff;border-bottom:1px solid #e5e9ee;"></div>
<div class="abs" style="left:448px;top:664.2px;width:11px;height:11px;border:1px solid #767676;border-radius:2.5px;background:#fff;"></div>
<div class="td" style="left:473.3px;top:664.3px;"><span class="nx tn">2023-2024</span></div>
<div class="td" style="left:557.8px;top:664.3px;">采暖费</div>
<div class="td" style="left:630.3px;top:664.3px;">车库单价</div>
<div class="td" style="left:703.4px;top:664.3px;"><span class="nx tn">31</span></div>
<div class="td" style="left:747.8px;top:664.3px;"><span class="nx tn">310</span></div>
<div class="td" style="left:905.4px;top:664.3px;"><span class="nx tn">310</span></div>
<div class="td" style="left:964px;top:664.3px;"><span class="nx tn">0</span></div>
<div class="td" style="left:1036.5px;top:664.3px;"><span class="nx tn">0</span></div>
<div class="td" style="left:1109.2px;top:664.3px;"><span class="nx tn">0</span></div>
<div class="td" style="left:1181.9px;top:664.3px;"><span class="nx tn">0</span></div>
<div class="td" style="left:1254.7px;top:664.3px;"><span class="nx tn">0</span></div>
<div class="td" style="left:1326.7px;top:664.3px;">采暖费</div>
<div class="td" style="left:1385.3px;top:664.3px;">开供</div>
<div class="td" style="left:1458.9px;top:664.3px;"><span class="nx tn">10</span></div>
<div class="td" style="left:1517.5px;top:664.3px;"><span class="nx tn">10</span></div>
<div class="td" style="left:1590px;top:664.3px;"><span class="nx tn">10</span></div>
<div class="td" style="left:1662.4px;top:664.3px;"><span class="nx tn">0</span></div>
<div class="td" style="left:1735.2px;top:664.3px;"><span class="nx tn">0</span></div>
<div class="abs" style="left:820.2px;top:658.2px;width:63px;height:28px;border:1px solid #e6e6e6;border-radius:4px;background:#fff;color:#e8704f;font-size:12.7px;line-height:22px;padding-left:6px;"><span class="nx" style="font-size:14px;transform:scaleX(.9)">310</span></div>
<div class="abs" style="left:437px;top:690px;width:1439.5px;height:37px;background:#fff;border-bottom:1px solid #e5e9ee;"></div>
<div class="abs" style="left:448px;top:700.2px;width:11px;height:11px;border:1px solid #767676;border-radius:2.5px;background:#fff;"></div>
<div class="td" style="left:473.3px;top:700.3px;"><span class="nx tn">2023-2024</span></div>
<div class="td" style="left:557.8px;top:700.3px;">采暖费</div>
<div class="td" style="left:630.3px;top:700.3px;">车库单价</div>
<div class="td" style="left:703.4px;top:700.3px;"><span class="nx tn">31</span></div>
<div class="td" style="left:747.8px;top:700.3px;"><span class="nx tn">15.5</span></div>
<div class="td" style="left:905.4px;top:700.3px;"><span class="nx tn">15.5</span></div>
<div class="td" style="left:964px;top:700.3px;"><span class="nx tn">0</span></div>
<div class="td" style="left:1036.5px;top:700.3px;"><span class="nx tn">0</span></div>
<div class="td" style="left:1109.2px;top:700.3px;"><span class="nx tn">0</span></div>
<div class="td" style="left:1181.9px;top:700.3px;"><span class="nx tn">0</span></div>
<div class="td" style="left:1254.7px;top:700.3px;"><span class="nx tn">0</span></div>
<div class="td" style="left:1326.7px;top:700.3px;">违约金</div>
<div class="td" style="left:1385.3px;top:700.3px;">开供</div>
<div class="td" style="left:1458.9px;top:700.3px;"><span class="nx tn">10</span></div>
<div class="td" style="left:1517.5px;top:700.3px;"><span class="nx tn">10</span></div>
<div class="td" style="left:1590px;top:700.3px;"><span class="nx tn">10</span></div>
<div class="td" style="left:1662.4px;top:700.3px;"><span class="nx tn">0</span></div>
<div class="td" style="left:1735.2px;top:700.3px;"><span class="nx tn">0</span></div>
<div class="abs" style="left:820.2px;top:694.2px;width:63px;height:28px;border:1px solid #e6e6e6;border-radius:4px;background:#fff;color:#e8704f;font-size:12.7px;line-height:22px;padding-left:6px;"><span class="nx" style="font-size:14px;transform:scaleX(.9)">15.5</span></div>
<div class="abs" style="left:437px;top:727px;width:1439.5px;height:36px;background:#fff;border-bottom:1px solid #e5e9ee;"></div>
<div class="abs" style="left:448px;top:736.2px;width:11px;height:11px;border:1px solid #767676;border-radius:2.5px;background:#fff;"></div>
<div class="td" style="left:473.3px;top:736.3px;"><span class="nx tn">2022-2023</span></div>
<div class="td" style="left:557.8px;top:736.3px;">采暖费</div>
<div class="td" style="left:630.3px;top:736.3px;">车库单价</div>
<div class="td" style="left:703.4px;top:736.3px;"><span class="nx tn">31</span></div>
<div class="td" style="left:747.8px;top:736.3px;"><span class="nx tn">310</span></div>
<div class="td" style="left:905.4px;top:736.3px;"><span class="nx tn">310</span></div>
<div class="td" style="left:964px;top:736.3px;"><span class="nx tn">0</span></div>
<div class="td" style="left:1036.5px;top:736.3px;"><span class="nx tn">0</span></div>
<div class="td" style="left:1109.2px;top:736.3px;"><span class="nx tn">0</span></div>
<div class="td" style="left:1181.9px;top:736.3px;"><span class="nx tn">0</span></div>
<div class="td" style="left:1254.7px;top:736.3px;"><span class="nx tn">0</span></div>
<div class="td" style="left:1326.7px;top:736.3px;">采暖费</div>
<div class="td" style="left:1385.3px;top:736.3px;">开供</div>
<div class="td" style="left:1458.9px;top:736.3px;"><span class="nx tn">10</span></div>
<div class="td" style="left:1517.5px;top:736.3px;"><span class="nx tn">10</span></div>
<div class="td" style="left:1590px;top:736.3px;"><span class="nx tn">10</span></div>
<div class="td" style="left:1662.4px;top:736.3px;"><span class="nx tn">0</span></div>
<div class="td" style="left:1735.2px;top:736.3px;"><span class="nx tn">0</span></div>
<div class="abs" style="left:820.2px;top:730.2px;width:63px;height:28px;border:1px solid #e6e6e6;border-radius:4px;background:#fff;color:#e8704f;font-size:12.7px;line-height:22px;padding-left:6px;"><span class="nx" style="font-size:14px;transform:scaleX(.9)">310</span></div>
<div class="abs" style="left:437px;top:763px;width:1439.5px;height:36px;background:#fff;border-bottom:1px solid #e5e9ee;"></div>
<div class="abs" style="left:448px;top:772.3px;width:11px;height:11px;border:1px solid #767676;border-radius:2.5px;background:#fff;"></div>
<div class="td" style="left:473.3px;top:772.4px;"><span class="nx tn">2022-2023</span></div>
<div class="td" style="left:557.8px;top:772.4px;">采暖费</div>
<div class="td" style="left:630.3px;top:772.4px;">车库单价</div>
<div class="td" style="left:703.4px;top:772.4px;"><span class="nx tn">31</span></div>
<div class="td" style="left:747.8px;top:772.4px;"><span class="nx tn">15.5</span></div>
<div class="td" style="left:905.4px;top:772.4px;"><span class="nx tn">15.5</span></div>
<div class="td" style="left:964px;top:772.4px;"><span class="nx tn">0</span></div>
<div class="td" style="left:1036.5px;top:772.4px;"><span class="nx tn">0</span></div>
<div class="td" style="left:1109.2px;top:772.4px;"><span class="nx tn">0</span></div>
<div class="td" style="left:1181.9px;top:772.4px;"><span class="nx tn">0</span></div>
<div class="td" style="left:1254.7px;top:772.4px;"><span class="nx tn">0</span></div>
<div class="td" style="left:1326.7px;top:772.4px;">违约金</div>
<div class="td" style="left:1385.3px;top:772.4px;">开供</div>
<div class="td" style="left:1458.9px;top:772.4px;"><span class="nx tn">10</span></div>
<div class="td" style="left:1517.5px;top:772.4px;"><span class="nx tn">10</span></div>
<div class="td" style="left:1590px;top:772.4px;"><span class="nx tn">10</span></div>
<div class="td" style="left:1662.4px;top:772.4px;"><span class="nx tn">0</span></div>
<div class="td" style="left:1735.2px;top:772.4px;"><span class="nx tn">0</span></div>
<div class="abs" style="left:820.2px;top:766.3px;width:63px;height:28px;border:1px solid #e6e6e6;border-radius:4px;background:#fff;color:#e8704f;font-size:12.7px;line-height:22px;padding-left:6px;"><span class="nx" style="font-size:14px;transform:scaleX(.9)">15.5</span></div>
<div class="abs" style="left:437px;top:798.2px;width:1px;height:9px;background:#e6e6e6;"></div>
<div class="abs" style="left:1876.5px;top:581.6px;width:10px;height:226px;background:#f4f4f4;"></div>
<div class="abs" style="left:1878.3px;top:582.5px;width:6.8px;height:189px;background:#c1c1c1;border-radius:3.5px;"></div>
<div class="abs" style="left:438.5px;top:807px;width:1428px;height:9px;background:#c9c9c9;border-radius:4.5px;"></div>
<div class="abs" style="left:437px;top:815.8px;width:1439.5px;height:31px;background:#eef2f7;border-bottom:1px solid #cfcfcf;"></div>
<div class="td" style="left:561.2px;top:821.5px;color:#555;">合计</div>
<div class="td" style="left:751.6px;top:821.5px;color:#e5222b;"><span class="nx tn">1271.00</span></div>
<div class="td" style="left:823.8px;top:821.5px;color:#e5222b;"><span class="nx tn">310.00</span></div>
<div class="td" style="left:909.3px;top:821.5px;color:#555;"><span class="nx tn">1,271.00</span></div>
<div class="td" style="left:967.9px;top:821.5px;color:#555;"><span class="nx tn">0.00</span></div>
<div class="td" style="left:1040.7px;top:821.5px;color:#555;"><span class="nx tn">0.00</span></div>
<div class="td" style="left:1113.6px;top:821.5px;color:#555;"><span class="nx tn">0.00</span></div>
<div class="td" style="left:1186.5px;top:821.5px;color:#555;"><span class="nx tn">0.00</span></div>
<div class="td" style="left:1259.4px;top:821.5px;color:#555;"><span class="nx tn">0.00</span></div>
<div class="fl" style="left:770.4px;top:868.3px;">实收金额</div>
<div class="fi" style="left:823.8px;top:863.3px;width:166.4px;height:26px;line-height:26px;text-align:right;padding-right:14px;">310.00</div>
<div class="fl" style="left:1323.5px;top:868.3px;">找零</div>
<div class="fi" style="left:1385.7px;top:863.3px;width:166.4px;height:26px;line-height:26px;text-align:right;padding-right:14px;">0.00</div>
<div class="abs" style="left:1863px;top:484px;width:50.4px;height:50.4px;border-radius:50%;background:radial-gradient(circle at 50% 50%,#f1f4fd 0%,#e9eefc 50%,#d3ddfa 78%,#b7c7f8 100%);"><svg class="abs" style="left:15px;top:12px" width="20" height="29" viewBox="0 0 20 29"><defs><linearGradient id="ug1" x1="0" y1="0" x2="1" y2="1"><stop offset="0" stop-color="#7d9dfb"/><stop offset="1" stop-color="#4467f2"/></linearGradient><linearGradient id="uh1" x1="0" y1="0" x2="1" y2="0"><stop offset="0" stop-color="#e4e4e4"/><stop offset="0.7" stop-color="#bdbdbd"/><stop offset="1" stop-color="#8c8c8c"/></linearGradient></defs><rect x="4.2" y="0.8" width="11.8" height="6.6" fill="url(#uh1)"/><rect x="6.6" y="3" width="2" height="2" fill="#666"/><rect x="11" y="3" width="2" height="2" fill="#666"/><path d="M1.2 7 H18.8 V19 Q18.8 28 10 28 Q1.2 28 1.2 19 Z" fill="url(#ug1)"/></svg></div>
<div class="abs" style="left:1863px;top:598px;width:50.4px;height:50.4px;border-radius:50%;background:radial-gradient(circle at 50% 50%,#f1f4fd 0%,#e9eefc 50%,#d3ddfa 78%,#b7c7f8 100%);"><svg class="abs" style="left:15px;top:12px" width="20" height="29" viewBox="0 0 20 29"><defs><linearGradient id="ug2" x1="0" y1="0" x2="1" y2="1"><stop offset="0" stop-color="#7d9dfb"/><stop offset="1" stop-color="#4467f2"/></linearGradient><linearGradient id="uh2" x1="0" y1="0" x2="1" y2="0"><stop offset="0" stop-color="#e4e4e4"/><stop offset="0.7" stop-color="#bdbdbd"/><stop offset="1" stop-color="#8c8c8c"/></linearGradient></defs><rect x="4.2" y="0.8" width="11.8" height="6.6" fill="url(#uh2)"/><rect x="6.6" y="3" width="2" height="2" fill="#666"/><rect x="11" y="3" width="2" height="2" fill="#666"/><path d="M1.2 7 H18.8 V19 Q18.8 28 10 28 Q1.2 28 1.2 19 Z" fill="url(#ug2)"/></svg></div>
</div>
<div class="abs" style="left:0;top:888.8px;width:50.3px;height:23px;background:#96999d;z-index:9;">
<i class="abs" style="left:4.3px;top:1.5px;width:1.4px;height:20px;background:repeating-linear-gradient(180deg,#b9bcc0 0 1.5px,transparent 1.5px 4px);"></i>
<div class="abs" style="left:12.8px;top:3.6px;width:14.6px;height:15.4px;background:#d9501e;border-radius:2px;transform:rotate(-15deg);color:#f3ece6;font-weight:bold;font-size:16px;line-height:15.4px;text-align:center;font-family:'Liberation Sans',sans-serif;">S</div>
<i class="abs" style="left:37.8px;top:3.2px;width:8.2px;height:4.8px;border:1px solid #f0f0f0;border-radius:50%;"></i>
<i class="abs" style="left:37.8px;top:14.4px;width:8.2px;height:3.8px;border:1.4px solid #1c2a50;border-top:none;"></i>
</div>
<!-- FOOTER -->
<div id="footer" class="abs" style="left:180px;top:878px;width:1740px;height:33px;background:#fff;border-top:1px solid #dde4e8;border-bottom:1px solid #e6e6e6;"></div>
</body>
</html>
